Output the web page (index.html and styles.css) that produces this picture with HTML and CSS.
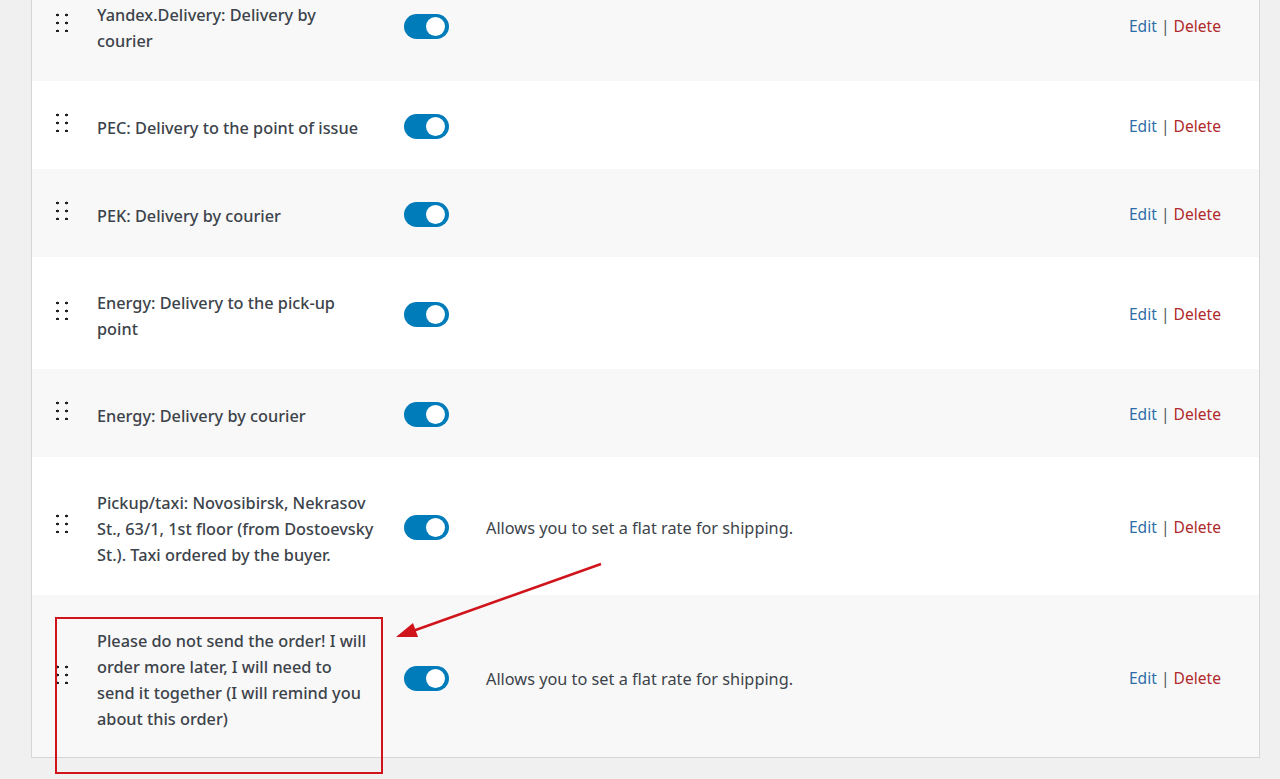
FILE: index.html
```html
<!DOCTYPE html>
<html lang="en">
<head>
    <meta charset="UTF-8">
    <meta name="viewport" content="width=device-width, initial-scale=1.0">
    <title>Shipping methods</title>
    <link rel="stylesheet" href="styles.css">
</head>
<body>
    <div class="methods">
        <div class="row">
            <div class="handle"><span></span></div>
            <div class="name">Yandex.Delivery: Delivery by courier</div>
            <div class="toggle"><span class="switch on"></span></div>
            <div class="desc"></div>
            <div class="actions"><a class="edit" href="#">Edit</a> <span class="sep">|</span> <a class="delete" href="#">Delete</a></div>
        </div>
        <div class="row">
            <div class="handle"><span></span></div>
            <div class="name">PEC: Delivery to the point of issue</div>
            <div class="toggle"><span class="switch on"></span></div>
            <div class="desc"></div>
            <div class="actions"><a class="edit" href="#">Edit</a> <span class="sep">|</span> <a class="delete" href="#">Delete</a></div>
        </div>
        <div class="row">
            <div class="handle"><span></span></div>
            <div class="name">PEK: Delivery by courier</div>
            <div class="toggle"><span class="switch on"></span></div>
            <div class="desc"></div>
            <div class="actions"><a class="edit" href="#">Edit</a> <span class="sep">|</span> <a class="delete" href="#">Delete</a></div>
        </div>
        <div class="row">
            <div class="handle"><span></span></div>
            <div class="name">Energy: Delivery to the pick-up point</div>
            <div class="toggle"><span class="switch on"></span></div>
            <div class="desc"></div>
            <div class="actions"><a class="edit" href="#">Edit</a> <span class="sep">|</span> <a class="delete" href="#">Delete</a></div>
        </div>
        <div class="row">
            <div class="handle"><span></span></div>
            <div class="name">Energy: Delivery by courier</div>
            <div class="toggle"><span class="switch on"></span></div>
            <div class="desc"></div>
            <div class="actions"><a class="edit" href="#">Edit</a> <span class="sep">|</span> <a class="delete" href="#">Delete</a></div>
        </div>
        <div class="row">
            <div class="handle"><span></span></div>
            <div class="name">Pickup/taxi: Novosibirsk, Nekrasov St., 63/1, 1st floor (from Dostoevsky St.). Taxi ordered by the buyer.</div>
            <div class="toggle"><span class="switch on"></span></div>
            <div class="desc">Allows you to set a flat rate for shipping.</div>
            <div class="actions"><a class="edit" href="#">Edit</a> <span class="sep">|</span> <a class="delete" href="#">Delete</a></div>
        </div>
        <div class="row">
            <div class="handle"><span></span></div>
            <div class="name">Please do not send the order! I will order more later, I will need to<br>send it together (I will remind you about this order)</div>
            <div class="toggle"><span class="switch on"></span></div>
            <div class="desc">Allows you to set a flat rate for shipping.</div>
            <div class="actions"><a class="edit" href="#">Edit</a> <span class="sep">|</span> <a class="delete" href="#">Delete</a></div>
        </div>
    </div>

    <!-- пометка поверх списка -->
    <div class="mark-box"></div>
    <svg class="mark-arrow" width="1280" height="779" viewBox="0 0 1280 779">
        <line x1="601" y1="564" x2="410" y2="632" stroke="#d0141c" stroke-width="2.5"/>
        <polygon points="396,637 413,623 418,637" fill="#d0141c"/>
    </svg>
</body>
</html>
```

FILE: styles.css
```css
*{
    margin: 0;
    padding: 0;
    box-sizing: border-box;
}
body{
    background-color: #f0f0f1;
    font-family: "Noto Sans", "Open Sans", sans-serif;
    font-size: 16px;
    color: #3c434a;
    overflow: hidden;
    height: 779px;
}
.methods{
    width: 1229px;
    margin: -32px 0 0 31px;
    border: 1px solid #d6d6d9;
    background-color: #fff;
}
/* строка таблицы */
.row{
    display: grid;
    grid-template-columns: 65px 307px 82px 1fr auto;
    align-items: center;
    padding: 31px 38px 29px 0;
    line-height: 26px;
}
.row:nth-child(odd){
    background-color: #f8f8f8;
}
/* последняя строка чуть ниже остальных */
.row:last-child{
    padding-bottom: 27px;
}
.handle{
    display: flex;
    justify-content: flex-start;
    padding-left: 24px;
    margin-top: -8px;
}
/* шесть точек для перетаскивания */
.handle span{
    width: 12px;
    height: 19px;
    background-image: radial-gradient(circle, #1d2327 1.3px, transparent 1.6px);
    background-size: 9px 8px;
    background-position: -3px -2px;
}
/* текст чуть ниже середины строки, высоту строки не меняем */
.name{
    font-size: 16.3px;
    font-weight: 500;
    padding-right: 29px;
    margin: 2px 0 -2px;
}
.toggle{
    display: flex;
}
.switch{
    position: relative;
    width: 45px;
    height: 25px;
    border-radius: 13px;
    background-color: #007cba;
}
.switch.on::after{
    content: "";
    position: absolute;
    top: 3px;
    right: 4px;
    width: 19px;
    height: 19px;
    border-radius: 50%;
    background-color: #fff;
}
.desc{
    font-size: 16.3px;
    margin: 1px 0 -1px;
}
.actions{
    font-size: 15.6px;
    line-height: 28px;
    white-space: nowrap;
}
.actions a{
    text-decoration: none;
}
.edit{
    color: #2c6ea8;
}
.delete{
    color: #b02a2c;
}
.sep{
    color: #50575e;
}
.mark-box{
    position: absolute;
    left: 55px;
    top: 617px;
    width: 328px;
    height: 157px;
    border: 2px solid #d0141c;
}
.mark-arrow{
    position: absolute;
    left: 0;
    top: 0;
    pointer-events: none;
}
```
